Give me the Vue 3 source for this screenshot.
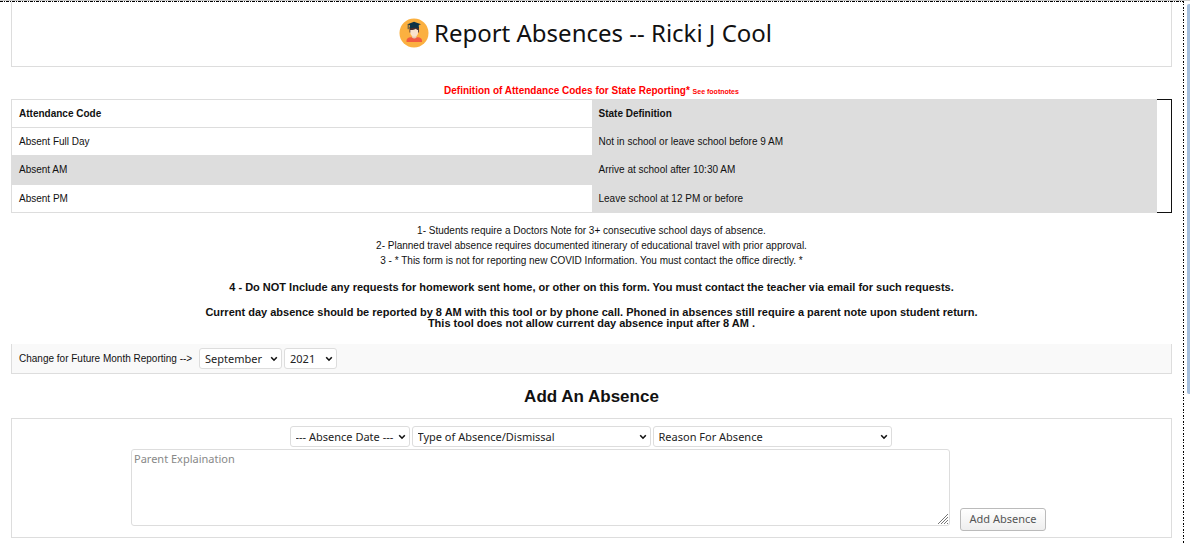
<script setup>
import { ref } from 'vue'

const codes = [
  { code: 'Absent Full Day', definition: 'Not in school or leave school before 9 AM' },
  { code: 'Absent AM', definition: 'Arrive at school after 10:30 AM' },
  { code: 'Absent PM', definition: 'Leave school at 12 PM or before' },
]
const months = ['September', 'October', 'November', 'December']
const years = ['2021', '2022']
const month = ref('September')
const year = ref('2021')
const explanation = ref('')
</script>

<template>
  <div class="shell">
    <main class="page">
      <header class="panel title-panel">
        <svg class="avatar" viewBox="0 0 30 30" aria-hidden="true">
          <circle cx="15" cy="15" r="14.5" fill="#fbb040" />
          <path d="M7.500 24v-1.200c0-2.200 1.800-3.600 4-3.600h7.500c2.200 0 4 1.400 4 3.600v1.200z" fill="#f15a40" />
          <path d="M13 16.500h4.500v3c-1 1.200-3.500 1.200-4.500 0z" fill="#e8c9ae" />
          <path d="M10.500 9h9.500v5.500h-9.500z" fill="#4a2d2b" />
          <path d="M11.300 12c1.500.2 4.600-.3 5.600-1.300.6.900 1.300 1.300 2.200 1.300v2.700c0 2.300-1.800 4-3.900 4s-3.900-1.700-3.900-4z" fill="#f9e3cb" />
          <path d="M15 3.800 22 6.200 15 8.800 8.500 6.200z" fill="#0f3347" />
          <path d="M10.800 6.500h9v4c-2-1-7-1-9 0z" fill="#0f3347" />
          <path d="M9.200 6.200v5" stroke="#0f3347" stroke-width=".8" />
        </svg>
        <h1>Report Absences -- Ricki J Cool</h1>
      </header>

      <table class="codes">
        <caption>Definition of Attendance Codes for State Reporting* <small>See footnotes</small></caption>
        <thead>
          <tr><th scope="col">Attendance Code</th><th scope="col" class="definition">State Definition</th><td class="spare"></td></tr>
        </thead>
        <tbody>
          <tr v-for="row in codes" :key="row.code">
            <td>{{ row.code }}</td><td class="definition">{{ row.definition }}</td><td class="spare"></td>
          </tr>
        </tbody>
      </table>

      <section class="notes">
        <p>1- Students require a Doctors Note for 3+ consecutive school days of absence.</p>
        <p>2- Planned travel absence requires documented itinerary of educational travel with prior approval.</p>
        <p>3 - * This form is not for reporting new COVID Information. You must contact the office directly. *</p>
      </section>
      <p class="notice homework">4 - Do NOT Include any requests for homework sent home, or other on this form. You must contact the teacher via email for such requests.</p>
      <p class="notice">Current day absence should be reported by 8 AM with this tool or by phone call. Phoned in absences still require a parent note upon student return.<br />This tool does not allow current day absence input after 8 AM .</p>

      <div class="month-bar">
        <label for="month">Change for Future Month Reporting --&gt;</label>
        <select id="month" v-model="month" class="month"><option v-for="m in months" :key="m">{{ m }}</option></select>
        <select v-model="year" class="year" aria-label="Year"><option v-for="y in years" :key="y">{{ y }}</option></select>
      </div>

      <h2>Add An Absence</h2>
      <form class="panel absence-form" @submit.prevent>
        <div class="choices">
          <select class="date" aria-label="Absence date"><option>--- Absence Date ---</option></select>
          <select class="wide" aria-label="Type of absence"><option>Type of Absence/Dismissal</option></select>
          <select class="wide" aria-label="Reason for absence"><option>Reason For Absence</option></select>
        </div>
        <div class="entry">
          <textarea v-model="explanation" placeholder="Parent Explaination" aria-label="Parent explanation"></textarea>
          <button type="submit">Add Absence</button>
        </div>
      </form>
    </main>
    <div class="scroll-track" aria-hidden="true"><div class="thumb"></div></div>
  </div>
</template>

<style>
body { background: #fff; }
</style>

<style scoped>
* { box-sizing: border-box; }
.shell {
  display: flex;
  min-height: 100vh;
  border-top: 1px solid #ccc;
  color: #111;
  font-family: "Liberation Sans", Arial, sans-serif;
  font-size: 10px;
}
.page {
  flex: 1;
  min-width: 0;
  padding: 1px 12px 4px 11px;
  background:
    repeating-linear-gradient(90deg, #000 0 3px, transparent 3px 4px, #000 4px 5px, transparent 5px 6px) top / 100% 1px no-repeat,
    repeating-linear-gradient(180deg, #000 0 2px, transparent 2px 3px, #000 3px 4px, transparent 4px 6px) right / 1px 100% no-repeat;
}
.panel { border: 1px solid #ddd; }
.title-panel {
  display: flex;
  align-items: center;
  justify-content: center;
  gap: 5px;
  height: 65px;
  padding: 0 12px 2px 0;
  border-top: 0;
}
.avatar { width: 30px; height: 30px; }
h1 {
  margin: 0;
  font: 400 24px/32px "Noto Sans", sans-serif;
}
.codes {
  width: 100%;
  margin-top: 16px;
  border-collapse: separate;
  border-spacing: 0;
  table-layout: fixed;
}
caption {
  height: 16px;
  color: #f00;
  font-weight: bold;
  line-height: 15px;
}
small { font-size: 7px; }
.codes th, .codes td {
  height: 28px;
  padding: 0 7px 1px;
  border: solid #ddd;
  border-width: 0 0 1px;
  text-align: left;
}
.codes th:first-child, .codes td:first-child { width: 50%; border-left-width: 1px; }
.codes thead th, .codes thead td { height: 29px; border-top-width: 1px; }
.codes tbody tr:nth-child(2) td { height: 29px; }
.codes tbody tr:nth-child(2) td:first-child { background: #ddd; }
.codes .definition { background: #ddd; }
.codes .spare {
  width: 15px;
  padding: 0;
  border-color: #111;
  border-width: 0 1px 0 0;
}
.codes thead .spare { border-top-width: 1px; }
.codes tbody tr:last-child .spare { border-bottom-width: 1px; }
p { margin: 0; }
.notes {
  margin-top: 10px;
  text-align: center;
  line-height: 15px;
}
.notice {
  text-align: center;
  font-size: 11px;
  font-weight: bold;
  line-height: 11px;
}
.homework { margin: 14px 0; }
.month-bar {
  display: flex;
  align-items: center;
  gap: 2px;
  height: 30px;
  margin-top: 15px;
  padding-left: 7px;
  border: solid #ddd;
  border-width: 0 1px 1px;
  background: #f9f9f9;
}
.month-bar label { min-width: 178px; }
select, textarea, button {
  margin: 0;
  border: 1px solid #ddd;
  border-radius: 3px;
  background-color: #fff;
  color: #222;
  font: 11px "Noto Sans", sans-serif;
}
select {
  appearance: none;
  height: 21px;
  padding: 0 12px 0 5px;
  background-image: url("data:image/svg+xml,%3Csvg xmlns='http://www.w3.org/2000/svg' width='8' height='6' viewBox='0 0 8 6'%3E%3Cpath d='M1.200 1.200 4 4.200 6.800 1.200' fill='none' stroke='%23111' stroke-width='1.600'/%3E%3C/svg%3E");
  background-position: right 3px center;
  background-repeat: no-repeat;
}
.month { width: 83px; }
.year { width: 53px; }
h2 {
  margin: 13px 0 11px;
  text-align: center;
  font-size: 17px;
  line-height: 20px;
}
.absence-form { padding: 7px 0 11px; }
.choices {
  display: flex;
  justify-content: center;
  gap: 2px;
  padding-right: 2px;
}
.date { width: 120px; }
.wide { width: 239px; }
.entry {
  display: flex;
  align-items: flex-end;
  gap: 10px;
  margin: 2px 125px 0 119px;
}
textarea {
  flex: 1;
  min-width: 0;
  height: 77px;
  padding: 1px 2px;
  resize: both;
}
textarea::-webkit-resizer {
  background: url("data:image/svg+xml,%3Csvg xmlns='http://www.w3.org/2000/svg' width='12' height='12'%3E%3Cpath d='M1 11 11 1M4 11l7-7M7 11l4-4M10 11l1-1' stroke='%23777'/%3E%3C/svg%3E") right bottom no-repeat;
}
textarea::placeholder { color: #888; }
button {
  width: 86px;
  height: 23px;
  margin-bottom: -5px;
  padding: 0 0 2px;
  border-color: #bbb;
  background: linear-gradient(#fff, #eee);
  color: #555;
}
.scroll-track { width: 6px; padding: 3px 0 0 3px; }
.thumb {
  height: 390px;
  border-radius: 2px 0 0 2px;
  background: #a5bfdd;
}
</style>
